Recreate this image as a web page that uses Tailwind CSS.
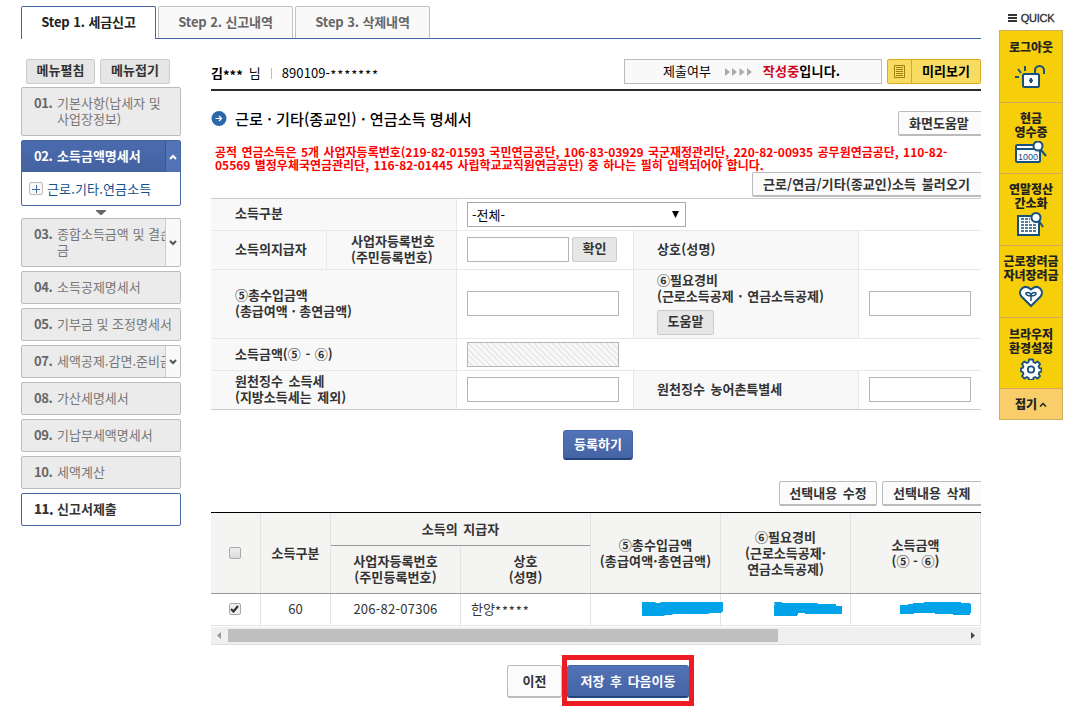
<!DOCTYPE html>
<html lang="ko">
<head>
<meta charset="utf-8">
<title>세금신고</title>
<script src="https://cdn.jsdelivr.net/npm/@tailwindcss/browser@4"></script>
</head>
<body class="bg-white">
<div class="w-[1078px] h-[721px] overflow-hidden flex font-['Noto_Sans_CJK_KR',sans-serif] text-[13px] leading-4 text-[#333] whitespace-nowrap [word-spacing:2px]">

  <div class="ml-[21px] w-[960px] shrink-0 overflow-hidden">
    <!-- step tabs -->
    <div class="mt-[6px] h-[33px] flex font-bold text-[#666] [word-spacing:0px] tracking-[-0.1px]">
      <div class="w-[135px] border border-b-0 border-[#4466a8] rounded-t-[2px] flex items-center justify-center text-[#222] pb-[2px]">Step 1. 세금신고</div>
      <div class="flex flex-1 border-b border-[#4466a8] pl-[2px] gap-[2px]">
        <div class="w-[135px] border border-b-0 border-[#c0c0c0] bg-[#f9f9f9] rounded-t-[2px] flex items-center justify-center pb-px">Step 2. 신고내역</div>
        <div class="w-[135px] border border-b-0 border-[#c0c0c0] bg-[#f9f9f9] rounded-t-[2px] flex items-center justify-center pb-px">Step 3. 삭제내역</div>
      </div>
    </div>

    <div class="flex">
      <!-- side menu -->
      <nav class="w-[160px] mr-[30px] pt-[20px] shrink-0 text-[#777] [word-spacing:0px]">
        <div class="flex gap-[5px] pl-[5px] mb-[3px] font-bold text-[#333]">
          <div class="w-[69px] h-[25px] border border-[#ccc] rounded-[2px] bg-[#e6e6e6] flex items-center justify-center pb-[4px]">메뉴펼침</div>
          <div class="w-[70px] h-[25px] border border-[#ccc] rounded-[2px] bg-[#e6e6e6] flex items-center justify-center pb-[4px]">메뉴접기</div>
        </div>
        <div class="h-[49px] border border-[#bbb] rounded-[2px] bg-[#ebebeb] flex pl-[12px] pt-[7px]"><b class="w-[23px] text-[#666] tracking-[-0.4px]">01.</b><span>기본사항(납세자 및<br>사업장정보)</span></div>
        <div class="mt-[4px] h-[66px] border border-[#4466a8] rounded-[2px]">
          <div class="h-[31px] bg-linear-to-b from-[#4a6bae] to-[#4562a0] text-white font-bold flex items-center pl-[12px]">
            <span class="w-[23px] tracking-[-0.4px] pb-[2px]">02.</span><span class="flex-1 pb-[2px]">소득금액명세서</span>
            <span class="w-[15px] h-full border-l border-[#3a5590] bg-[#5273b6] flex items-center justify-center"><svg width="8" height="6" viewBox="0 0 8 6" fill="none" stroke="#fff" stroke-width="2"><path d="M1 5l3-3 3 3"/></svg></span>
          </div>
          <div class="h-[33px] flex items-center pl-[7px] text-[#14528f]">
            <span class="w-[14px] h-[13px] border border-[#bbb] rounded-[2px] bg-[#f8f8f8] flex items-center justify-center mr-[4px]"><svg width="8" height="8" viewBox="0 0 8 8" stroke="#4466a8"><path d="M0 4.500h8M4.500 0v8"/></svg></span><span class="tracking-[0.15px]">근로.기타.연금소득</span>
          </div>
        </div>
        <div class="h-[12px] flex justify-center items-center"><svg width="10" height="5" viewBox="0 0 10 5" fill="#666"><path d="M0 0h10v1L5.500 5h-1L0 1z"/></svg></div>
        <div class="h-[49px] border border-[#bbb] rounded-[2px] bg-[#ebebeb] flex pl-[12px]"><b class="w-[23px] pt-[7px] text-[#666] tracking-[-0.4px]">03.</b><span class="w-[108px] overflow-hidden pt-[7px]">종합소득금액 및 결손<br>금</span><span class="w-[15px] border-l border-[#ccc] bg-[#f9f9f9] flex items-center justify-center"><svg width="8" height="6" viewBox="0 0 8 6" fill="none" stroke="#555" stroke-width="2"><path d="M1 1l3 3 3-3"/></svg></span></div>
        <div class="mt-[4px] h-[33px] border border-[#bbb] rounded-[2px] bg-[#ebebeb] flex items-center pl-[12px] pb-[2px]"><b class="w-[23px] text-[#666] tracking-[-0.4px]">04.</b>소득공제명세서</div>
        <div class="mt-[4px] h-[33px] border border-[#bbb] rounded-[2px] bg-[#ebebeb] flex items-center pl-[12px] pb-[2px]"><b class="w-[23px] text-[#666] tracking-[-0.4px]">05.</b>기부금 및 조정명세서</div>
        <div class="mt-[4px] h-[33px] border border-[#bbb] rounded-[2px] bg-[#ebebeb] flex items-center pl-[12px]"><b class="w-[23px] text-[#666] tracking-[-0.4px] pb-[2px]">07.</b><span class="w-[108px] overflow-hidden pb-[2px]">세액공제.감면.준비금</span><span class="w-[15px] h-full border-l border-[#ccc] bg-[#f9f9f9] flex items-center justify-center"><svg width="8" height="6" viewBox="0 0 8 6" fill="none" stroke="#555" stroke-width="2"><path d="M1 1l3 3 3-3"/></svg></span></div>
        <div class="mt-[4px] h-[33px] border border-[#bbb] rounded-[2px] bg-[#ebebeb] flex items-center pl-[12px] pb-[2px]"><b class="w-[23px] text-[#666] tracking-[-0.4px]">08.</b>가산세명세서</div>
        <div class="mt-[4px] h-[33px] border border-[#bbb] rounded-[2px] bg-[#ebebeb] flex items-center pl-[12px] pb-[2px]"><b class="w-[23px] text-[#666] tracking-[-0.4px]">09.</b>기납부세액명세서</div>
        <div class="mt-[4px] h-[33px] border border-[#bbb] rounded-[2px] bg-[#ebebeb] flex items-center pl-[12px] pb-[2px]"><b class="w-[23px] text-[#666] tracking-[-0.4px]">10.</b>세액계산</div>
        <div class="mt-[4px] h-[33px] border border-[#4466a8] rounded-[2px] flex items-center pl-[12px] pb-[2px] font-bold text-[#333]"><b class="w-[23px] tracking-[-0.4px]">11.</b>신고서제출</div>
      </nav>

      <!-- main column -->
      <main class="w-[770px] shrink-0 overflow-hidden">
        <div class="h-[50px] pt-[20px] flex items-start text-black">
          <div class="flex items-center h-[28px] flex-1"><b>김<span class="relative top-[2px]">***</span></b><span class="ml-[6px]">님</span><span class="w-px h-[11px] bg-[#bbb] mx-[10px]"></span><span class="tracking-[0.1px]">890109-</span><span class="relative top-[2px] tracking-[0.9px]">*******</span></div>
          <div class="w-[258px] h-[25px] border border-[#bbb] bg-[#f9f9f9] flex items-center pl-[38px] pb-[2px]">제출여부
            <svg class="ml-[14px] mr-[11px] mt-[2px]" width="27" height="8" viewBox="0 0 27 8" fill="#aaa"><path d="M0 0l5 4-5 4zM7 0l5 4-5 4zM14.500 0l5 4-5 4zM22 0l5 4-5 4z"/></svg>
            <b class="tracking-[0.2px]"><span class="text-[#d0021b]">작성중</span>입니다.</b></div>
          <div class="ml-[5px] w-[94px] h-[25px] border border-[#dca81c] rounded-[2px] bg-[#f8dc62] flex items-center font-bold">
            <span class="w-[24px] h-full border-r border-[#dca81c] flex items-center justify-center"><svg width="11" height="13" viewBox="0 0 11 13" fill="none" stroke="#a08010"><path d="M.5.5h10v12H.5zM2 2.500h7M2 4.500h7M2 6.500h7M2 8.500h7M2 10.500h7"/></svg></span>
            <span class="flex-1 pl-[10px] pb-[2px]">미리보기</span>
          </div>
        </div>
        <div class="h-[2px] bg-[#2b2b2b]"></div>
        <div class="h-[54px] pt-[20px] flex items-start">
          <svg class="mr-[8px]" width="16" height="16" viewBox="0 0 16 16"><circle cx="8" cy="7.500" r="7.500" fill="#2a67ab"/><path d="M4.500 7.500h6M8 5l2.500 2.500L8 10" fill="none" stroke="#fff" stroke-width="1.200"/></svg>
          <h1 class="flex-1 -mt-px text-[15.2px] leading-4 font-medium text-black [word-spacing:0px]">근로 · 기타(종교인) · 연금소득 명세서</h1>
          <div class="w-[90px] -mr-[7px] h-[25px] border border-[#bbb] border-b-2 rounded-[2px] bg-[#fbfbfb] flex items-center pl-[10px] font-bold">화면도움말</div>
        </div>
        <div class="h-[53px]">
          <p class="pl-[4px] text-[12px] leading-[13px] font-bold text-[#f00] [word-spacing:1px]">공적 연금소득은 5개 사업자등록번호(219-82-01593 국민연금공단, 106-83-03929 국군재정관리단, 220-82-00935 공무원연금공단, 110-82-<br>05569 별정우체국연금관리단, 116-82-01445 사립학교교직원연금공단) 중 하나는 필히 입력되어야 합니다.</p>
          <div class="mt-px ml-[541px] w-[240px] h-[25px] border border-[#bbb] border-b-2 rounded-[2px] bg-[#fbfbfb] flex items-center pl-[10px] font-bold tracking-[0.1px]">근로/연금/기타(종교인)소득 불러오기</div>
        </div>

        <!-- entry form -->
        <div class="border-t border-[#ccc] font-bold">
          <div class="h-[32px] border-b border-[#e8e8e8] flex">
            <div class="w-[246px] bg-[#f8f8f8] border-r border-[#e8e8e8] pl-[24px] pb-[3px] flex items-center">소득구분</div>
            <div class="flex items-center pl-[10px]"><div class="w-[219px] h-[25px] border border-[#aaa] flex items-center justify-between px-[4px] pr-[6px] font-normal text-black">-전체-<svg width="7" height="7" viewBox="0 0 7 7"><path d="M0 0h7L3.500 7z"/></svg></div></div>
          </div>
          <div class="h-[39px] border-b border-[#e8e8e8] flex">
            <div class="w-[116px] bg-[#f8f8f8] border-r border-[#e8e8e8] pl-[24px] pb-[2px] flex items-center">소득의지급자</div>
            <div class="w-[130px] bg-[#f8f8f8] border-r border-[#e8e8e8] pl-[24px] pb-[2px] flex items-center">사업자등록번호<br>(주민등록번호)</div>
            <div class="w-[177px] border-r border-[#e8e8e8] pl-[10px] pb-px gap-[3px] flex items-center"><div class="w-[102px] h-[25px] border border-[#b5b5b5]"></div><div class="w-[45px] h-[25px] border border-[#ccc] rounded-[2px] bg-[#e6e6e6] flex items-center justify-center pb-[3px]">확인</div></div>
            <div class="w-[225px] bg-[#f8f8f8] border-r border-[#e8e8e8] pl-[23px] pb-[2px] flex items-center tracking-[0.15px]">상호(성명)</div>
          </div>
          <div class="h-[69px] border-b border-[#e8e8e8] flex">
            <div class="w-[246px] bg-[#f8f8f8] border-r border-[#e8e8e8] pl-[24px] pb-[2px] flex items-center [word-spacing:0px]">⑤총수입금액<br>(총급여액 · 총연금액)</div>
            <div class="w-[177px] border-r border-[#e8e8e8] pl-[10px] pb-px flex items-center"><div class="w-[152px] h-[25px] border border-[#b5b5b5]"></div></div>
            <div class="w-[225px] bg-[#f8f8f8] border-r border-[#e8e8e8] pl-[23px] pt-[2px] [word-spacing:1px]">⑥필요경비<br>(근로소득공제 · 연금소득공제)<div class="mt-[6px] w-[57px] h-[25px] border border-[#ccc] rounded-[2px] bg-[#e6e6e6] flex items-center justify-center pb-[3px]">도움말</div></div>
            <div class="pl-[10px] pb-px flex items-center"><div class="w-[102px] h-[25px] border border-[#b5b5b5]"></div></div>
          </div>
          <div class="h-[32px] border-b border-[#e8e8e8] flex">
            <div class="w-[246px] bg-[#f8f8f8] border-r border-[#e8e8e8] pl-[24px] pb-[2px] flex items-center [word-spacing:1px]">소득금액(⑤ - ⑥)</div>
            <div class="pl-[10px] flex items-center"><div class="w-[152px] h-[25px] border border-[#b5b5b5] bg-[repeating-linear-gradient(45deg,#f7f7f7_0px,#f7f7f7_3.2px,#dcdcdc_3.2px,#dcdcdc_4.24px)]"></div></div>
          </div>
          <div class="h-[39px] border-b border-[#ccc] flex">
            <div class="w-[246px] bg-[#f8f8f8] border-r border-[#e8e8e8] pl-[24px] pb-[2px] flex items-center">원천징수 소득세<br>(지방소득세는 제외)</div>
            <div class="w-[177px] border-r border-[#e8e8e8] pl-[10px] pb-px flex items-center"><div class="w-[152px] h-[25px] border border-[#b5b5b5]"></div></div>
            <div class="w-[225px] bg-[#f8f8f8] border-r border-[#e8e8e8] pl-[23px] pb-[2px] flex items-center">원천징수 농어촌특별세</div>
            <div class="pl-[10px] pb-px flex items-center"><div class="w-[102px] h-[25px] border border-[#b5b5b5]"></div></div>
          </div>
        </div>

        <div class="h-[71px] pt-[20px] pl-[352px]"><div class="w-[70px] h-[30px] rounded-[3px] border border-[#4466a8] border-b-2 border-b-[#24427c] bg-linear-to-b from-[#5273b6] to-[#4564a4] text-white font-bold flex items-center justify-center pb-px">등록하기</div></div>

        <div class="h-[31px] flex gap-[5px] pl-[568px] font-bold">
          <div class="w-[98px] h-[25px] border border-[#bbb] border-b-2 rounded-[2px] bg-[#fbfbfb] flex items-center justify-center shrink-0">선택내용 수정</div>
          <div class="w-[110px] h-[25px] border border-[#bbb] border-b-2 rounded-[2px] bg-[#fbfbfb] flex items-center pl-[10px] shrink-0">선택내용 삭제</div>
        </div>

        <!-- registered income list -->
        <div class="relative border-t border-black">
          <div class="h-[81px] bg-[#f4f4f2] border-b border-[#999] flex font-bold text-center">
            <div class="w-[50px] border-r border-[#e2e2e2] flex items-center justify-center"><span class="w-[12px] h-[12px] -ml-[2px] rounded-[2px] border border-[#aaa] bg-linear-to-b from-[#eee] to-[#ddd]"></span></div>
            <div class="w-[70px] border-r border-[#e2e2e2] flex items-center justify-center">소득구분</div>
            <div class="w-[260px] border-r border-[#e2e2e2]">
              <div class="h-[33px] border-b border-[#999] flex items-center justify-center">소득의 지급자</div>
              <div class="h-[47px] flex">
                <div class="w-[130px] border-r border-[#e2e2e2] flex items-center justify-center pb-px tracking-[0.1px]">사업자등록번호<br>(주민등록번호)</div>
                <div class="flex-1 flex items-center justify-center pb-px">상호<br>(성명)</div>
              </div>
            </div>
            <div class="w-[130px] border-r border-[#e2e2e2] flex items-center justify-center tracking-[0.15px]">⑤총수입금액<br>(총급여액·총연금액)</div>
            <div class="w-[130px] border-r border-[#e2e2e2] flex items-center justify-center">⑥필요경비<br>(근로소득공제·<br>연금소득공제)</div>
            <div class="w-[130px] border-r border-[#e2e2e2] flex items-center justify-center [word-spacing:0px]">소득금액<br>(⑤ - ⑥)</div>
          </div>
          <div class="h-[32px] border-b border-[#e2e2e2] flex items-stretch">
            <div class="w-[50px] border-r border-[#e2e2e2] flex items-center justify-center"><span class="w-[12px] h-[12px] -ml-[2px] -mt-px rounded-[2px] border border-[#aaa] bg-[#eee] flex items-center justify-center"><svg width="9" height="8" viewBox="0 0 9 8" fill="none" stroke="#333" stroke-width="2.200"><path d="M1 4l2.500 2.500L8 1"/></svg></span></div>
            <div class="w-[70px] border-r border-[#e2e2e2] flex items-center justify-center pb-[2px]">60</div>
            <div class="w-[130px] border-r border-[#e2e2e2] flex items-center justify-center pb-[2px] tracking-[0.25px]">206-82-07306</div>
            <div class="w-[130px] border-r border-[#e2e2e2] flex items-center pl-[10px] pb-[2px]">한양<span class="relative top-[2px] tracking-[0.9px]">*****</span></div>
            <div class="w-[130px] border-r border-[#e2e2e2]"></div>
            <div class="w-[130px] border-r border-[#e2e2e2]"></div>
            <div class="w-[130px] border-r border-[#e2e2e2]"></div>
          </div>
          <!-- masked amounts -->
          <svg class="absolute left-[431px] top-[88px]" width="330" height="16" viewBox="0 0 330 16" fill="#00a2e8"><path d="M0 1h13l1 1h4l1-1h7V1h55v9l-2 2H68l-2 1H31l-1 1h-6l-3 1H0z"/><path d="M132 1h8v1h35l1 1h18v2h6v8h-37v-1h-7v2h-1v1h-23V4h1z"/><path d="M258 4h8V3h5V2h11V1h37v1h9v1h1v9h-1v2h-17v-1h-18v-1h-21v1h-14z"/></svg>
        </div>
        <div class="mt-px h-[18px] bg-[#f0f0f0] border-b border-[#ddd] flex items-center">
          <svg class="ml-[6px] mr-[7px]" width="4" height="7" viewBox="0 0 4 7" fill="#999"><path d="M4 0v7L0 3.500z"/></svg>
          <span class="w-[550px] h-[13px] bg-[#bfbfbf]"></span>
          <svg class="ml-auto mr-[6px]" width="4" height="7" viewBox="0 0 4 7" fill="#444"><path d="M0 0v7l4-3.500z"/></svg>
        </div>

        <div class="mt-[10px] pl-[296px] flex items-start font-bold">
          <div class="w-[55px] h-[33px] mt-[10px] border border-[#bbb] border-b-2 rounded-[3px] bg-[#fbfbfb] flex items-center justify-center">이전</div>
          <div class="w-[132px] h-[51px] border-[5px] border-[#ed1c24] pt-[5px]"><div class="h-[33px] rounded-[3px] border-t border-b-2 border-t-[#4466a8] border-b-[#24427c] bg-linear-to-b from-[#5273b6] to-[#4564a4] text-white flex items-center justify-center">저장 후 다음이동</div></div>
        </div>
      </main>
    </div>
  </div>

  <!-- quick menu -->
  <aside class="ml-[18px] w-[64px] shrink-0 font-black text-[12px] leading-[14px] text-center text-[#222] [word-spacing:0px]">
    <div class="h-[30px] pt-[6px] flex items-center justify-center gap-[4px] font-['Liberation_Sans',sans-serif] font-normal text-[11px] tracking-[-0.3px] [-webkit-text-stroke:0.3px_#333]"><svg width="9" height="8" viewBox="0 0 9 8" fill="#333"><path d="M0 0h9v2H0zM0 3h9v2H0zM0 6h9v2H0z"/></svg>QUICK</div>
    <div class="border border-[#cfb060] bg-[#f7ce0a]">
      <div class="h-[72px] border-b border-[#d4a95a] pt-[9px]">로그아웃
        <svg class="mx-auto mt-[11px]" width="34" height="26" viewBox="0 0 34 26" fill="none" stroke="#17507f" stroke-width="2"><rect x="9" y="9" width="16" height="13" rx="1.500" fill="#fff"/><path d="M21 9V5.500a4.500 4.500 0 0 1 9 0V9M1 12h4M4 4l3 4M11 1v5"/><path d="M17 13v5M15 15.500h4"/></svg>
      </div>
      <div class="h-[71px] border-b border-[#d4a95a] pt-[8px]">현금<br>영수증
        <svg class="mx-auto mt-[2px]" width="34" height="26" viewBox="0 0 34 26" fill="none" stroke="#17507f" stroke-width="2"><rect x="2" y="4" width="24" height="17" rx="1.500" fill="#fff"/><path d="M2 8h23"/><text x="4" y="18.500" font-family="Liberation Sans" font-size="9" font-weight="400" fill="#17507f" stroke="none">1000</text><circle cx="24" cy="5" r="4.500" fill="#fff"/><path d="M27 9l5 6"/></svg>
      </div>
      <div class="h-[72px] border-b border-[#d4a95a] pt-[8px]">연말정산<br>간소화
        <svg class="mx-auto mt-[2px]" width="34" height="26" viewBox="0 0 34 26" fill="none" stroke="#17507f" stroke-width="2"><rect x="4" y="4" width="21" height="19" fill="#fff"/><path d="M7 7h9M7 10h9M7 13h15M7 16h15M7 19h15" stroke-width="1.500" stroke-dasharray="3 1"/><circle cx="22" cy="5.500" r="4.500" fill="#fff"/><path d="M25 9l4 6"/></svg>
      </div>
      <div class="h-[72px] border-b border-[#d4a95a] pt-[8px]">근로장려금<br>자녀장려금
        <svg class="mx-auto mt-[2px]" width="26" height="24" viewBox="0 0 26 24" fill="none" stroke="#17507f" stroke-width="2"><path d="M13 22L3.500 12.500C-1 7 6-1 13 5.500C20-1 27 7 22.500 12.500z" fill="#fff"/><path d="M13 17v-5M13 12c-3 0-5-1-5-3 3-1 5 0 5 3zM13 12c0-3 2-4 5-3 0 2-2 3-5 3z" stroke-width="1.500"/></svg>
      </div>
      <div class="h-[71px] border-b border-[#d4a95a] pt-[9px]">브라우저<br>환경설정
        <svg class="mx-auto mt-[3px]" width="22" height="22" viewBox="0 0 22 22" fill="#fff" stroke="#17507f" stroke-width="1.800" stroke-linejoin="round"><path d="M9 1.500h4l.5 2.700 1.700.8 2.300-1.600 2.600 2.700-1.500 2.300.7 1.700 2.200.4v3.200l-2.200.5-.7 1.700 1.500 2.200-2.600 2.500-2.300-1.500-1.700.7-.5 2.200H9l-.5-2.200-1.700-.7-2.300 1.500-2.500-2.500 1.500-2.200-.7-1.700L1 13.500v-3.200l1.800-.4.7-1.700L2 5.900l2.500-2.500L6.800 5l1.700-.8z"/><circle cx="11" cy="11.500" r="3.200"/></svg>
      </div>
      <div class="h-[30px] bg-[#f9cd69] flex items-center justify-center gap-[2px]">접기<svg width="8" height="5" viewBox="0 0 8 5" fill="none" stroke="#222" stroke-width="1.500"><path d="M1 4.500l3-3 3 3"/></svg></div>
    </div>
  </aside>
</div>
</body>
</html>
